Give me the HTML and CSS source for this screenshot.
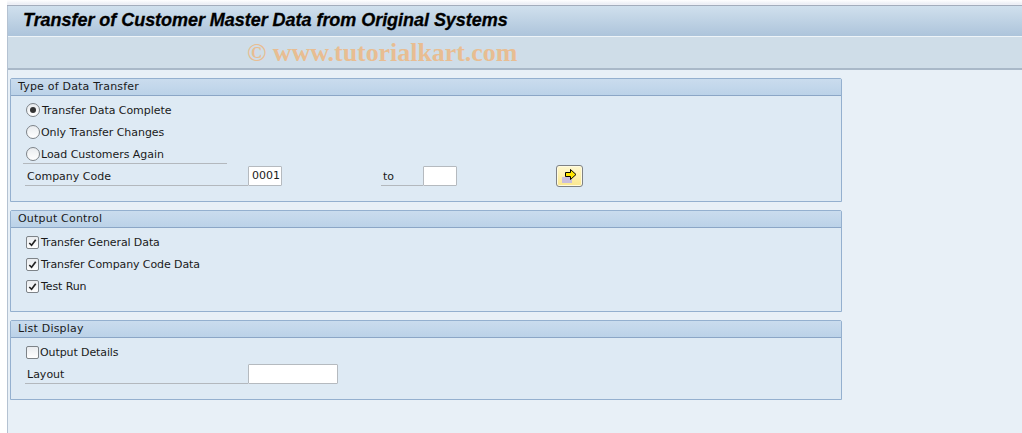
FILE: index.html
```html
<!DOCTYPE html>
<html lang="en">
<head>
<meta charset="utf-8">
<title>Transfer of Customer Master Data from Original Systems</title>
<link rel="stylesheet" href="styles.css">
</head>
<body>
<div class="topstrip"></div>
<div class="shell">
  <header class="titlebar"><h1>Transfer of Customer Master Data from Original Systems</h1></header>
  <div class="toolbar"><span class="mark">© www.tutorialkart.com</span></div>
  <main class="content">
    <section class="panel panel-type">
      <h2 class="panel-head">Type of Data Transfer</h2>
      <div class="panel-body">
        <div class="row choice"><span class="radio on"></span><span class="label lift">Transfer Data Complete</span></div>
        <div class="row choice"><span class="radio"></span><span class="label">Only Transfer Changes</span></div>
        <div class="row choice underline"><span class="radio"></span><span class="label">Load Customers Again</span></div>
        <div class="row field">
          <span class="caption caption-main">Company Code</span>
          <span class="input w-code">0001</span>
          <span class="caption caption-to">to</span>
          <span class="input w-to"></span>
          <button class="more" type="button" aria-label="Multiple selection">
            <svg width="17" height="16" viewBox="0 0 17 16"><rect x="1" y="8" width="10" height="6" fill="#c9bedd"/><path d="M4.500 3.500H9.500V.5L15 5.500L9.500 10.500V7.500H4.500Z" fill="#ffe600" stroke="#000" stroke-width="1"/></svg>
          </button>
        </div>
      </div>
    </section>
    <section class="panel panel-output">
      <h2 class="panel-head">Output Control</h2>
      <div class="panel-body">
        <div class="row choice"><span class="check on"><svg width="12" height="12" viewBox="0 0 12 12"><path d="M2.500 6L5 8.500L9.500 2.500" fill="none" stroke="#222" stroke-width="1.800"/></svg></span><span class="label">Transfer General Data</span></div>
        <div class="row choice"><span class="check on"><svg width="12" height="12" viewBox="0 0 12 12"><path d="M2.500 6L5 8.500L9.500 2.500" fill="none" stroke="#222" stroke-width="1.800"/></svg></span><span class="label">Transfer Company Code Data</span></div>
        <div class="row choice"><span class="check on"><svg width="12" height="12" viewBox="0 0 12 12"><path d="M2.500 6L5 8.500L9.500 2.500" fill="none" stroke="#222" stroke-width="1.800"/></svg></span><span class="label">Test Run</span></div>
      </div>
    </section>
    <section class="panel panel-list">
      <h2 class="panel-head">List Display</h2>
      <div class="panel-body">
        <div class="row choice"><span class="check"></span><span class="label tight">Output Details</span></div>
        <div class="row field">
          <span class="caption caption-main">Layout</span>
          <span class="input w-layout"></span>
        </div>
      </div>
    </section>
  </main>
</div>
</body>
</html>
```
FILE: styles.css
```css
* { box-sizing: border-box; }
html, body { margin: 0; padding: 0; }
body {
  width: 1022px;
  height: 433px;
  overflow: hidden;
  background: #ffffff;
  font-family: "DejaVu Sans", "Liberation Sans", sans-serif;
  color: #1a1a1a;
}
.topstrip {
  height: 6px;
  margin-left: 7px;
  background: linear-gradient(#ffffff, #eef0f6 70%);
  border-bottom: 1px solid #a3adbc;
}
.shell {
  margin-left: 7px;
  height: 427px;
  border-left: 1px solid #b4c2d2;
  background: #e8f0f7;
  display: flex;
  flex-direction: column;
}
.titlebar {
  height: 31px;
  display: flex;
  align-items: center;
  padding: 0 0 2px 15px;
  background: linear-gradient(#d0e0ed, #adc4db);
  border-bottom: 1px solid #eef4f8;
}
.titlebar h1 {
  margin: 0;
  font: italic bold 18px "Liberation Sans", Arial, sans-serif;
  letter-spacing: -.04px;
  color: #000;
  -webkit-text-stroke: .3px #000;
}
.toolbar {
  height: 33px;
  background: #cfdde8;
  border-bottom: 2px solid #a9b8c8;
  padding-left: 239px;
  display: flex;
  align-items: center;
}
.mark {
  font: bold 26px "Liberation Serif", serif;
  color: #e8bd92;
  white-space: nowrap;
  letter-spacing: -.05px;
}
.content {
  padding: 8px 0 0 2px;
  display: flex;
  flex-direction: column;
  gap: 8px;
}
.panel {
  width: 832px;
  border: 1px solid #94b0cf;
  border-radius: 2px 2px 0 0;
  background: #deeaf4;
}
.panel-type { height: 124px; }
.panel-output { height: 102px; }
.panel-list { height: 80px; }
.panel-head {
  margin: 0;
  height: 17px;
  padding-left: 7px;
  background: linear-gradient(#cadcee, #bbd2e8);
  border-bottom: 1px solid #8ba6c6;
  font-size: 11px;
  font-weight: 400;
  line-height: 16px;
  letter-spacing: .2px;
  color: #1a1a1a;
}
.panel-body { padding-top: 3px; }
.row {
  height: 22px;
  display: flex;
  align-items: center;
  font-size: 11px;
  position: relative;
}
.choice { padding-left: 15px; }
.underline::after {
  content: "";
  position: absolute;
  left: 12px;
  width: 204px;
  bottom: 1px;
  border-bottom: 1px solid #b3b8bd;
}
.radio {
  width: 14px;
  height: 14px;
  border-radius: 50%;
  border: 1px solid #7d8388;
  background: linear-gradient(#e9ecef, #ffffff);
  flex: none;
  position: relative;
}
.radio.on::after {
  content: "";
  position: absolute;
  left: 3px;
  top: 3px;
  width: 6px;
  height: 6px;
  border-radius: 50%;
  background: #333;
}
.check {
  width: 13px;
  height: 13px;
  border-radius: 2px;
  border: 1px solid #7d8388;
  background: linear-gradient(#e9ecef, #ffffff);
  flex: none;
  display: flex;
}
.check svg { display: block; }
.label { margin-left: 1px; white-space: nowrap; letter-spacing: -.05px; }
.label.lift { margin-left: 2px; }
.check + .label { margin-left: 2px; letter-spacing: -.1px; }
.check + .label.tight { margin-left: 1px; }
.field { padding-left: 17px; }
.caption {
  height: 21px;
  margin-bottom: 1px;
  line-height: 24px;
  border-bottom: 1px solid #b3b8bd;
  padding-left: 2px;
  flex: none;
}
.caption-main { width: 223px; margin-left: -3px; }
.caption-to { width: 42px; margin-left: 99px; }
.input {
  height: 20px;
  background: #fff;
  border: 1px solid #b5babf;
  border-radius: 1px;
  line-height: 18px;
  padding-left: 3px;
  font-size: 11px;
  flex: none;
}
.w-code { width: 34px; }
.w-to { width: 34px; }
.w-layout { width: 90px; }
.more {
  margin-left: 99px;
  width: 27px;
  height: 22px;
  padding: 1px 0 0 4px;
  border: 1px solid #7f8284;
  border-radius: 3px;
  background: linear-gradient(#fff8cf, #fbe88e);
  box-shadow: inset 0 0 0 1px #fffbe0;
  display: flex;
  align-items: center;
  justify-content: flex-start;
  flex: none;
}
```
